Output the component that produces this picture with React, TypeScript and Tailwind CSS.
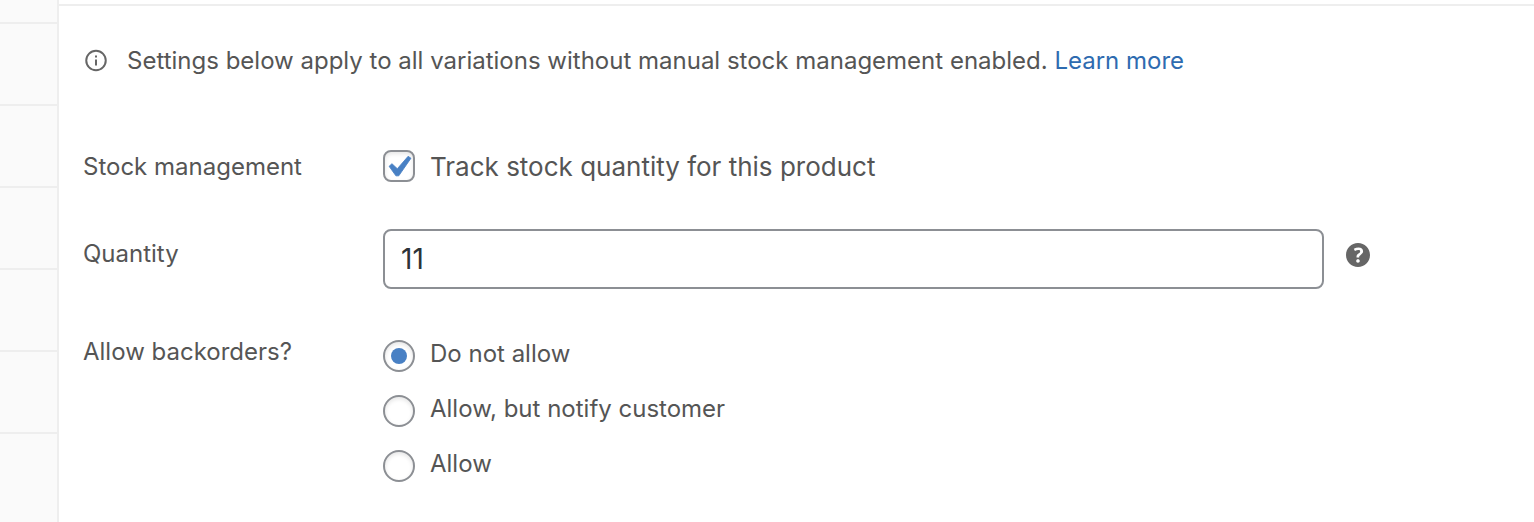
const BACKORDER_OPTIONS = [
  { value: "no", label: "Do not allow" },
  { value: "notify", label: "Allow, but notify customer" },
  { value: "yes", label: "Allow" },
];

const TAB_COUNT = 5;

function InfoIcon() {
  return (
    <svg aria-hidden viewBox="0 0 26 26" className="size-[26px] shrink-0" fill="none" stroke="#666666" strokeWidth="2">
      <circle cx="13" cy="12.5" r="9.75" />
      <path d="M13 11.5v6M13 7.5v2" />
    </svg>
  );
}

function CheckIcon() {
  return (
    <svg
      aria-hidden
      viewBox="2.86 1.9 15.24 15.24"
      className="pointer-events-none absolute inset-0 hidden size-8 peer-checked:block"
      fill="#4880c4"
      stroke="#4880c4"
      strokeWidth="0.4"
    >
      <path d="M14.83 4.89l1.34.94-5.81 8.38H9.02L5.78 9.67l1.34-1.25 2.57 2.4z" />
    </svg>
  );
}

function HelpIcon() {
  return (
    <svg aria-hidden viewBox="3 3 14 14" className="size-6" fill="#666666">
      <path d="M17 10c0-3.87-3.14-7-7-7-3.87 0-7 3.13-7 7s3.13 7 7 7c3.86 0 7-3.13 7-7zm-6.3 1.48H9.14v-.43c0-.38.08-.7.24-.98s.46-.57.88-.89c.41-.29.68-.53.81-.71.14-.18.2-.39.2-.62 0-.25-.09-.44-.28-.58-.19-.13-.45-.19-.79-.19-.58 0-1.25.19-2 .57l-.64-1.28c.87-.49 1.8-.74 2.77-.74.81 0 1.45.2 1.92.58.48.39.71.91.71 1.55 0 .43-.09.8-.29 1.11-.19.32-.57.67-1.11 1.06-.38.28-.61.49-.71.63-.1.15-.15.34-.15.57v.35zm-1.47 2.74c-.18-.17-.27-.42-.27-.73 0-.33.08-.58.26-.75s.43-.25.77-.25c.32 0 .57.09.75.26s.27.42.27.74c0 .3-.09.55-.27.72-.18.18-.43.27-.75.27-.33 0-.58-.09-.76-.26z" />
    </svg>
  );
}

function TabRail() {
  return (
    <div aria-hidden className="flex w-[59px] shrink-0 flex-col border-r-2 border-[#eeeeee] bg-[#fafafa]">
      <div className="h-6 border-b-2 border-[#eeeeee]" />
      {Array.from({ length: TAB_COUNT }, (_, i) => (
        <div key={i} className="h-[82px] border-b-2 border-[#eeeeee]" />
      ))}
    </div>
  );
}

export default function App() {
  return (
    <div className="flex min-h-screen bg-white font-['Inter','Liberation_Sans',sans-serif] text-2xl text-[#555555]">
      <TabRail />
      <main className="min-w-0 flex-1 pt-1">
        <div className="border-t-2 border-[#eeeeee] px-6 pt-[39px] pb-10">
          <p className="flex items-center gap-[18px]">
            <InfoIcon />
            <span>
              Settings below apply to all variations without manual stock management enabled.{" "}
              <a href="#learn-more" className="text-[#2e6bb0]">
                Learn more
              </a>
            </span>
          </p>

          <div className="mt-[73px] flex items-start leading-[34px]">
            <span id="stock-label" className="w-[300px] shrink-0">
              Stock management
            </span>
            <label className="flex items-start gap-[15px] text-[26px]">
              <span className="relative size-8 shrink-0">
                <input
                  type="checkbox"
                  defaultChecked
                  aria-describedby="stock-label"
                  className="peer block size-8 appearance-none rounded-lg border-2 border-[#8c8f94] bg-white shadow-[inset_0_2px_4px_rgba(0,0,0,0.1)]"
                />
                <CheckIcon />
              </span>
              Track stock quantity for this product
            </label>
          </div>

          <div className="mt-[45px] flex items-start">
            <label htmlFor="quantity" className="w-[300px] shrink-0 pt-[9px]">
              Quantity
            </label>
            <input
              id="quantity"
              type="text"
              inputMode="numeric"
              defaultValue="11"
              className="h-15 min-w-0 max-w-[941px] flex-1 rounded-lg border-2 border-[#8c8f94] bg-white px-4 text-[28px] text-[#2c3338]"
            />
            <button type="button" aria-label="Help: quantity" className="mt-3.5 ml-[22px] shrink-0">
              <HelpIcon />
            </button>
          </div>

          <fieldset className="mt-[49px] flex items-start leading-7">
            <legend className="float-left w-[300px] shrink-0">Allow backorders?</legend>
            <div className="flex flex-col gap-[23px] pt-0.5">
              {BACKORDER_OPTIONS.map((option, i) => (
                <label key={option.value} className="flex items-start gap-[15px]">
                  <input
                    type="radio"
                    name="backorders"
                    value={option.value}
                    defaultChecked={i === 0}
                    className="grid size-8 shrink-0 appearance-none place-content-center rounded-full border-2 border-[#8c8f94] bg-white shadow-[inset_0_2px_4px_rgba(0,0,0,0.1)] checked:before:block checked:before:size-4 checked:before:rounded-full checked:before:bg-[#4880c4]"
                  />
                  {option.label}
                </label>
              ))}
            </div>
          </fieldset>
        </div>
      </main>
    </div>
  );
}
